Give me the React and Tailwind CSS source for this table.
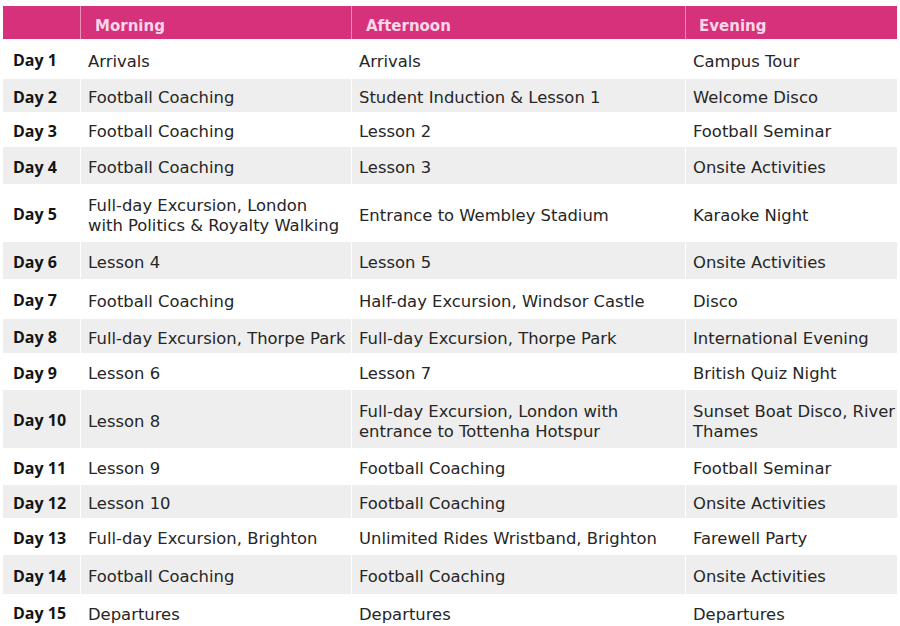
import React from "react";

const rows = [
  { day: "Day 1", m: "Arrivals", a: "Arrivals", e: "Campus Tour", h: "h-[40px]" },
  { day: "Day 2", m: "Football Coaching", a: "Student Induction & Lesson 1", e: "Welcome Disco", h: "h-[33px]" },
  { day: "Day 3", m: "Football Coaching", a: "Lesson 2", e: "Football Seminar", h: "h-[35px]" },
  { day: "Day 4", m: "Football Coaching", a: "Lesson 3", e: "Onsite Activities", h: "h-[37px]" },
  { day: "Day 5", m: ["Full-day Excursion, London", "with Politics & Royalty Walking"], a: "Entrance to Wembley Stadium", e: "Karaoke Night", h: "h-[58px]" },
  { day: "Day 6", m: "Lesson 4", a: "Lesson 5", e: "Onsite Activities", h: "h-[37px]" },
  { day: "Day 7", m: "Football Coaching", a: "Half-day Excursion, Windsor Castle", e: "Disco", h: "h-[40px]" },
  { day: "Day 8", m: "Full-day Excursion, Thorpe Park", a: "Full-day Excursion, Thorpe Park", e: "International Evening", h: "h-[34px]" },
  { day: "Day 9", m: "Lesson 6", a: "Lesson 7", e: "British Quiz Night", h: "h-[37px]" },
  { day: "Day 10", m: "Lesson 8", a: ["Full-day Excursion, London with", "entrance to Tottenha Hotspur"], e: ["Sunset Boat Disco, River", "Thames"], h: "h-[58px]" },
  { day: "Day 11", m: "Lesson 9", a: "Football Coaching", e: "Football Seminar", h: "h-[37px]" },
  { day: "Day 12", m: "Lesson 10", a: "Football Coaching", e: "Onsite Activities", h: "h-[33px]" },
  { day: "Day 13", m: "Full-day Excursion, Brighton", a: "Unlimited Rides Wristband, Brighton", e: "Farewell Party", h: "h-[37px]" },
  { day: "Day 14", m: "Football Coaching", a: "Football Coaching", e: "Onsite Activities", h: "h-[39px]" },
  { day: "Day 15", m: "Departures", a: "Departures", e: "Departures", h: "h-[36px]" },
];

function Txt({ v }) {
  if (Array.isArray(v)) {
    return (
      <div className="leading-[20px]">
        {v.map((l) => (
          <div key={l} className="whitespace-nowrap">{l}</div>
        ))}
      </div>
    );
  }
  return <div className="whitespace-nowrap leading-[20px]">{v}</div>;
}

export default function App() {
  return (
    <div className="w-[900px] h-[626px] bg-white overflow-hidden pt-[6px] pl-[3px]">
      <div className="w-[894px] flex flex-col">
        <div className="grid grid-cols-[78px_271px_334px_211px] h-[33px] bg-[#d6317b] font-['DejaVu_Sans',sans-serif] font-bold text-[15px] text-[#fbd6e8]">
          <div className="border-r border-[#e98fb6]"></div>
          <div className="flex items-center pl-[14px] pt-[7px] border-r border-[#e98fb6]">Morning</div>
          <div className="flex items-center pl-[14px] pt-[7px] border-r border-[#e98fb6]">Afternoon</div>
          <div className="flex items-center pl-[13px] pt-[7px]">Evening</div>
        </div>
        {rows.map((r, i) => (
          <div
            key={r.day}
            className={
              "grid grid-cols-[78px_271px_334px_211px] shrink-0 text-[16.4px] text-[#262626] font-['DejaVu_Sans',sans-serif] " +
              r.h +
              (i % 2 === 1 ? " bg-[#eeeeee]" : " bg-white")
            }
          >
            <div className="flex items-center pl-[10px] pt-[2px] border-r border-white font-['Open_Sans',sans-serif] font-bold text-[16px] text-[#141414]">
              {r.day}
            </div>
            <div className="flex items-center pl-[7px] pt-[5px] border-r border-white">
              <Txt v={r.m} />
            </div>
            <div className="flex items-center pl-[7px] pt-[5px] border-r border-white">
              <Txt v={r.a} />
            </div>
            <div className="flex items-center pl-[7px] pt-[5px]">
              <Txt v={r.e} />
            </div>
          </div>
        ))}
      </div>
    </div>
  );
}
